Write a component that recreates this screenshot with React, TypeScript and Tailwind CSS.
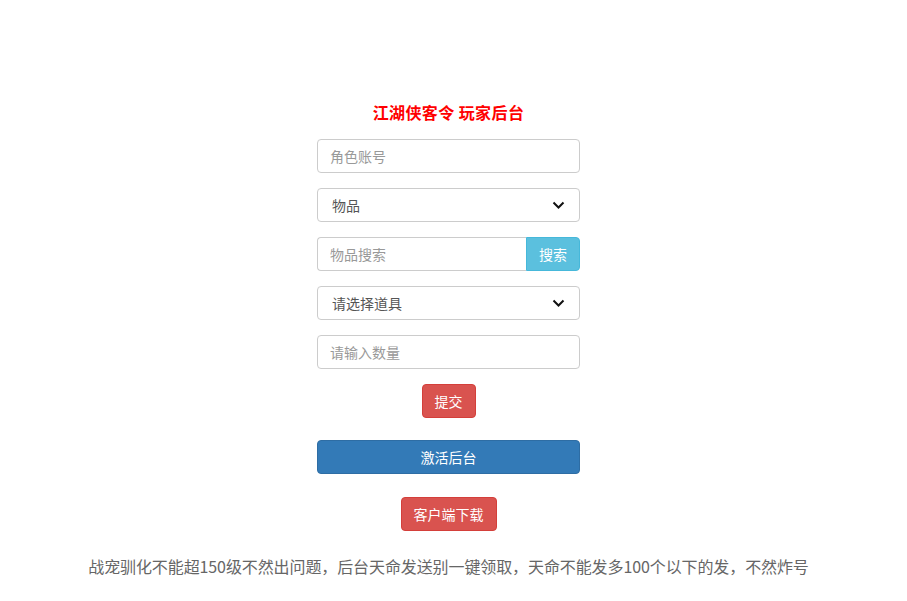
import React from 'react';

const font = { fontFamily: '"Microsoft YaHei", "Noto Sans CJK SC", "Noto Sans", sans-serif' };

function Chevron() {
  return (
    <svg width="13" height="9" viewBox="0 0 13 9" className="absolute right-[15px] top-[13px] pointer-events-none">
      <path d="M1.5 1.5 L6.5 6.5 L11.5 1.5" fill="none" stroke="#111" strokeWidth="2" />
    </svg>
  );
}

export default function App() {
  return (
    <div className="min-h-[601px] w-full bg-white text-[#555]" style={font}>
      <div className="flex flex-col items-center pr-[10px] pt-[101px]">
        <h3 className="text-[16px] leading-[22px] font-bold tracking-[0.4px] text-[#ff0000]">江湖侠客令 玩家后台</h3>

        <div className="mt-[16px] flex w-[263px] flex-col">
          <input
            placeholder="角色账号"
            className="h-[34px] w-full rounded-[4px] border border-[#ccc] px-[12px] text-[14px] outline-none placeholder:text-[#999]"
          />

          <div className="relative mt-[15px]">
            <select className="h-[34px] w-full appearance-none rounded-[4px] border border-[#ccc] bg-white px-[14px] text-[14px] text-[#555] outline-none">
              <option>物品</option>
            </select>
            <Chevron />
          </div>

          <div className="mt-[15px] flex h-[34px]">
            <input
              placeholder="物品搜索"
              className="h-[34px] min-w-0 flex-1 rounded-l-[4px] border border-r-0 border-[#ccc] px-[12px] text-[14px] outline-none placeholder:text-[#999]"
            />
            <button className="h-[34px] w-[54px] rounded-r-[4px] border border-[#46b8da] bg-[#5bc0de] text-[14px] text-white">
              搜索
            </button>
          </div>

          <div className="relative mt-[15px]">
            <select className="h-[34px] w-full appearance-none rounded-[4px] border border-[#ccc] bg-white px-[14px] text-[14px] text-[#555] outline-none">
              <option>请选择道具</option>
            </select>
            <Chevron />
          </div>

          <input
            placeholder="请输入数量"
            className="mt-[15px] h-[34px] w-full rounded-[4px] border border-[#ccc] px-[12px] text-[14px] outline-none placeholder:text-[#999]"
          />

          <div className="mt-[15px] flex justify-center">
            <button className="h-[34px] w-[54px] rounded-[4px] border border-[#d43f3a] bg-[#d9534f] text-[14px] text-white">
              提交
            </button>
          </div>

          <button className="mt-[22px] h-[34px] w-full rounded-[4px] border border-[#2e6da4] bg-[#337ab7] text-[14px] text-white">
            激活后台
          </button>

          <div className="mt-[23px] flex justify-center">
            <button className="h-[34px] w-[96px] rounded-[4px] border border-[#d43f3a] bg-[#d9534f] text-[14px] text-white">
              客户端下载
            </button>
          </div>
        </div>

        <p className="mt-[24px] text-[16px] leading-[22px] tracking-[-0.1px] text-[#666]">
          战宠驯化不能超150级不然出问题，后台天命发送别一键领取，天命不能发多100个以下的发，不然炸号
        </p>
      </div>
    </div>
  );
}
